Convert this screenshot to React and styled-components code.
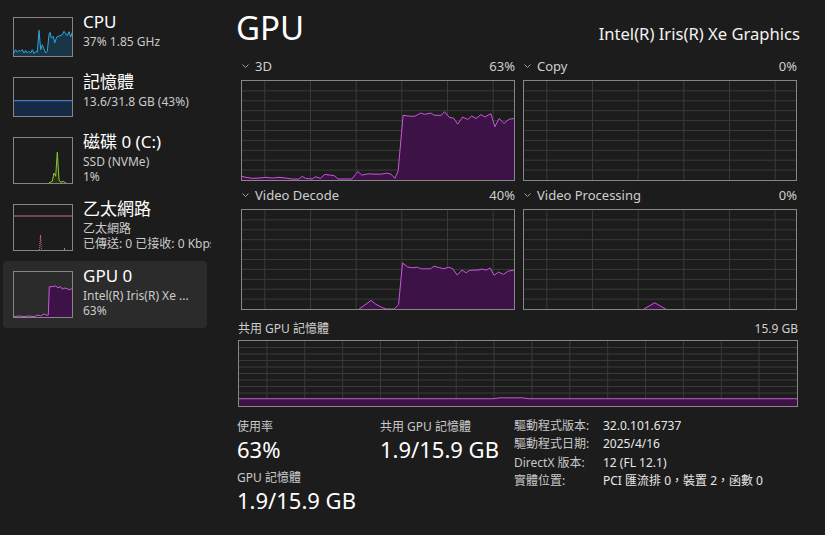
import React from 'react'
import styled, { createGlobalStyle } from 'styled-components'

const GlobalStyle = createGlobalStyle`
  html, body { margin: 0; padding: 0; background: #1c1c1c; }
  body { font-family: "Noto Sans", "Noto Sans CJK TC", sans-serif; color: #fff; }
`

const PURPLE = '#c65bd8'
const PURPLE_FILL = '#3d1246'

// measured graph points, px inside each box
const gpu3d = [[0,97.3],[4,98.3],[10.7,99.3],[17.3,99],[24,98.3],[30.7,99],[37.3,98.3],[44,99],[50.7,100],[57.3,100],[60.7,97.3],[64,99.3],[70.7,100],[74,97.7],[79,99.3],[83.3,95.3],[89,96],[93.3,96.7],[96.7,100],[110.7,100],[116.7,92.3],[120.7,96],[127.3,94.7],[134,95],[140.7,95],[145.7,94],[150,95],[154,99.3],[157.3,91.7],[162.3,35],[167.3,35.7],[174,36],[180,32.7],[184,34],[190,32.7],[194,35],[200.7,35],[204,31.3],[209,37.3],[213,37.7],[217.3,44],[222.3,36.7],[227.3,39.3],[231.3,35.7],[235.7,38.3],[240.7,34.3],[244.7,36.7],[250.7,33.3],[254.7,46.7],[259,38.3],[264,43.3],[269,39],[274,38.3]]
const videoDecode = [[118,101],[130,92.3],[135,96.3],[141.7,99.7],[145,101],[153.3,101],[157.7,96.7],[161.7,54],[166.7,58],[171.7,59],[176.7,58.3],[180,60],[190,60],[193.3,57.3],[198.3,58.7],[203.3,60],[208.3,58.3],[212.3,60],[216.7,66.3],[221.7,61.3],[225.7,64],[229,61.7],[233.3,61.3],[237.7,61.3],[241.7,60.3],[245.7,61.3],[250,59.3],[254,66.7],[258.3,63.3],[263.3,65.7],[268.3,62.3],[274,61.3]]
const videoProc = [[120.7,101],[131.7,94.7],[142.7,101]]
const shared = [[0,59.5],[255,59.5],[262,58.6],[284,58.6],[291,59.5],[560,59.5]]

const cpuPts = [[0,36],[1.7,32.7],[3.3,35.3],[5,33.3],[6.7,34.3],[8.3,32.7],[10,36],[11.7,33.3],[13.3,36],[15,34.3],[16.7,36],[18.3,32.7],[20,36.7],[21.7,34.3],[23.3,35.3],[25,13.3],[26.7,32.7],[28.3,27.7],[30,32],[31.7,36],[33.3,34.3],[35,17.7],[36,15.3],[37.3,21],[39.3,19.3],[40.7,26],[42.7,20],[44,19.3],[46,18.7],[48.3,17.7],[50,14.3],[51.7,16.7],[53.3,18.7],[55,14.7],[56.7,20],[58.3,15.3],[60,19.3]]
const memPts = [[0,22.7],[60,22.7]]
const diskPts = [[35,46],[36,45.3],[38.3,44.3],[40,36],[41.7,39.3],[43.3,15.3],[45,42.7],[46.7,45.3],[49.3,44.3],[50.7,45.3],[52,46]]
const gpuThumb = [[0,45.7],[5,45],[10,45.7],[15,45],[20,45.7],[24,44],[26.7,45],[30,43],[32.7,44.3],[34.3,44],[35.3,15.7],[38.3,15.7],[41.7,15],[44,16.7],[46.7,15.7],[48.3,18.3],[50,17],[53.3,17.7],[56,19],[57.3,17.7],[60,18.3]]

const Page = styled.div`
  display: flex;
  width: 825px;
  height: 535px;
  background: #1c1c1c;
  overflow: hidden;
`

const Sidebar = styled.nav`
  width: 211px;
  flex-shrink: 0;
  padding: 7px 0 0 3px;
  box-sizing: border-box;
  overflow: hidden;
`

const Item = styled.div`
  display: flex;
  align-items: flex-start;
  gap: 10px;
  width: 204px;
  height: ${p => (p.$tall ? 67 : 60)}px;
  padding: 10px 0 0 10px;
  box-sizing: border-box;
  border-radius: 4px;
  background: ${p => (p.$active ? '#2b2b2b' : 'transparent')};
`

const Thumb = styled.div`
  width: 60px;
  height: ${p => p.$h}px;
  flex-shrink: 0;
  border: 1px solid #858585;
  box-sizing: border-box;
  overflow: hidden;
  svg { display: block; width: 100%; height: 100%; }
`

const ItemText = styled.div`
  display: grid;
  grid-template-rows: 24px;
  grid-auto-rows: 15px;
  margin-top: -7px;
  white-space: nowrap;
`

const ItemTitle = styled.div`
  font-size: 17px;
  line-height: 24px;
  color: #fff;
`

const ItemSub = styled.div`
  font-size: 12px;
  line-height: 15px;
  color: #cacaca;
`

const Main = styled.main`
  width: 564px;
  margin-left: 25px;
  padding-top: 8px;
  flex-shrink: 0;
`

const Header = styled.header`
  display: flex;
  justify-content: space-between;
  align-items: baseline;
  height: 40px;
`

const Title = styled.h1`
  margin: 0;
  font-size: 33px;
  line-height: 40px;
  font-weight: 400;
`

const Adapter = styled.div`
  font-size: 16.6px;
  color: #f2f2f2;
`

const GraphGrid = styled.div`
  display: grid;
  grid-template-columns: 1fr 1fr;
  column-gap: 8px;
  row-gap: 4px;
  margin: 8px 3px 0 5px;
`

const LabelRow = styled.div`
  display: flex;
  justify-content: space-between;
  align-items: center;
  height: 20px;
  margin-bottom: ${p => p.$gap || 4}px;
  font-size: ${p => (p.$small ? 12 : 13)}px;
  color: #cfcfcf;
  white-space: nowrap;
`

const LabelName = styled.span`
  display: flex;
  align-items: center;
  gap: 6px;
  svg { margin-left: 1px; }
`

const GraphBox = styled.div`
  height: ${p => p.$h}px;
  border: 1px solid #868686;
  box-sizing: border-box;
  svg { display: block; width: 100%; height: 100%; }
`

const SharedSection = styled.section`
  margin: 8px 2px 0 2px;
`

const Stats = styled.div`
  display: grid;
  grid-template-columns: 143px 134px 1fr;
  margin-top: 12px;
  padding-left: 1px;
`

const StatBlock = styled.div`
  display: grid;
  grid-template-rows: 16px 28px;
  margin-bottom: 7px;
`

const StatLabel = styled.div`
  font-size: 12px;
  line-height: 16px;
  color: #cacaca;
`

const StatValue = styled.div`
  font-size: 22px;
  line-height: 28px;
  color: #fff;
`

const Details = styled.div`
  display: grid;
  grid-template-columns: 89px auto;
  grid-auto-rows: 18.4px;
  align-content: start;
  margin-top: -2px;
  font-size: 12px;
  line-height: 18.4px;
  white-space: nowrap;
`

const DetailKey = styled.span`
  color: #c8c8c8;
`

const DetailVal = styled.span`
  color: #e8e8e8;
`

const toStr = pts => pts.map(p => p.join(',')).join(' ')

const Chart = ({ w, h, pts, line, fill, step, offset, rows, extra }) => {
  const vLines = []
  if (step) for (let x = offset; x < w - 1; x += step) vLines.push(x)
  const hLines = []
  if (rows) for (let i = 1; i < rows; i++) hLines.push((i * h) / rows)
  const area = pts && pts.length
    ? toStr([...pts, [pts[pts.length - 1][0], h], [pts[0][0], h]])
    : null
  return (
    <svg viewBox={`0 0 ${w} ${h}`} preserveAspectRatio="none">
      {hLines.map(y => (
        <line key={'h' + y} x1="0" x2={w} y1={y} y2={y} stroke="#3a3a3a" strokeWidth="1" vectorEffect="non-scaling-stroke" />
      ))}
      {vLines.map(x => (
        <line key={'v' + x} x1={x} x2={x} y1="0" y2={h} stroke="#3a3a3a" strokeWidth="1" vectorEffect="non-scaling-stroke" />
      ))}
      {area && <polygon points={area} fill={fill} />}
      {pts && <polyline points={toStr(pts)} fill="none" stroke={line} strokeWidth="1" vectorEffect="non-scaling-stroke" />}
      {extra}
    </svg>
  )
}

const Chevron = () => (
  <svg width="7" height="4" viewBox="0 0 7 4">
    <path d="M0.5 0.5 L3.5 3.5 L6.5 0.5" fill="none" stroke="#a0a0a0" strokeWidth="1" />
  </svg>
)

const SideItem = ({ title, lines, h, active, children }) => (
  <Item $tall={h > 40} $active={active}>
    <Thumb $h={h}>{children}</Thumb>
    <ItemText>
      <ItemTitle>{title}</ItemTitle>
      {lines.map(l => <ItemSub key={l}>{l}</ItemSub>)}
    </ItemText>
  </Item>
)

const EngineGraph = ({ name, value, pts }) => (
  <div>
    <LabelRow>
      <LabelName><Chevron />{name}</LabelName>
      <span>{value}</span>
    </LabelRow>
    <GraphBox $h={101}>
      <Chart w={274} h={101} pts={pts} line={PURPLE} fill={PURPLE_FILL} step={46} offset={23} rows={10} />
    </GraphBox>
  </div>
)

export default function App() {
  return (
    <Page>
      <GlobalStyle />
      <Sidebar>
        <SideItem title="CPU" lines={['37%  1.85 GHz']} h={40}>
          <Chart w={58} h={38} pts={cpuPts.map(([x, y]) => [x, y - 1])} line="#2fa5d8" fill="#183645" />
        </SideItem>
        <SideItem title="記憶體" lines={['13.6/31.8 GB (43%)']} h={40}>
          <Chart w={58} h={38} pts={memPts} line="#4d8fe0" fill="#172a45" />
        </SideItem>
        <SideItem title="磁碟 0 (C:)" lines={['SSD (NVMe)', '1%']} h={47}>
          <Chart w={58} h={45} pts={diskPts.map(([x, y]) => [x, y - 1])} line="#8cc63f" fill="#25300f" />
        </SideItem>
        <SideItem title="乙太網路" lines={['乙太網路', '已傳送: 0 已接收: 0 Kbps']} h={47}>
          <Chart
            w={58}
            h={45}
            extra={
              <>
                <line x1="0" x2="58" y1="11" y2="11" stroke="#d0688c" strokeWidth="1" vectorEffect="non-scaling-stroke" />
                <polyline points="25.5,45 26.5,30 27.5,45" fill="none" stroke="#d0688c" strokeWidth="1" strokeDasharray="1 1" vectorEffect="non-scaling-stroke" />
                <line x1="50.5" x2="50.5" y1="43" y2="45" stroke="#d0688c" strokeWidth="1" vectorEffect="non-scaling-stroke" />
              </>
            }
          />
        </SideItem>
        <SideItem title="GPU 0" lines={['Intel(R) Iris(R) Xe ...', '63%']} h={47} active>
          <Chart w={58} h={45} pts={gpuThumb.map(([x, y]) => [x, y - 1])} line={PURPLE} fill={PURPLE_FILL} />
        </SideItem>
      </Sidebar>

      <Main>
        <Header>
          <Title>GPU</Title>
          <Adapter>Intel(R) Iris(R) Xe Graphics</Adapter>
        </Header>

        <GraphGrid>
          <EngineGraph name="3D" value="63%" pts={gpu3d} />
          <EngineGraph name="Copy" value="0%" pts={null} />
          <EngineGraph name="Video Decode" value="40%" pts={videoDecode} />
          <EngineGraph name="Video Processing" value="0%" pts={videoProc} />
        </GraphGrid>

        <SharedSection>
          <LabelRow $gap={2} $small>
            <span>共用 GPU 記憶體</span>
            <span>15.9 GB</span>
          </LabelRow>
          <GraphBox $h={67}>
            <Chart w={560} h={67} pts={shared} line={PURPLE} fill={PURPLE_FILL} step={38} offset={28} rows={10} />
          </GraphBox>
        </SharedSection>

        <Stats>
          <div>
            <StatBlock>
              <StatLabel>使用率</StatLabel>
              <StatValue>63%</StatValue>
            </StatBlock>
            <StatBlock>
              <StatLabel>GPU 記憶體</StatLabel>
              <StatValue>1.9/15.9 GB</StatValue>
            </StatBlock>
          </div>
          <div>
            <StatBlock>
              <StatLabel>共用 GPU 記憶體</StatLabel>
              <StatValue>1.9/15.9 GB</StatValue>
            </StatBlock>
          </div>
          <Details>
            <DetailKey>驅動程式版本:</DetailKey>
            <DetailVal>32.0.101.6737</DetailVal>
            <DetailKey>驅動程式日期:</DetailKey>
            <DetailVal>2025/4/16</DetailVal>
            <DetailKey>DirectX 版本:</DetailKey>
            <DetailVal>12 (FL 12.1)</DetailVal>
            <DetailKey>實體位置:</DetailKey>
            <DetailVal>PCI 匯流排 0，裝置 2，函數 0</DetailVal>
          </Details>
        </Stats>
      </Main>
    </Page>
  )
}
